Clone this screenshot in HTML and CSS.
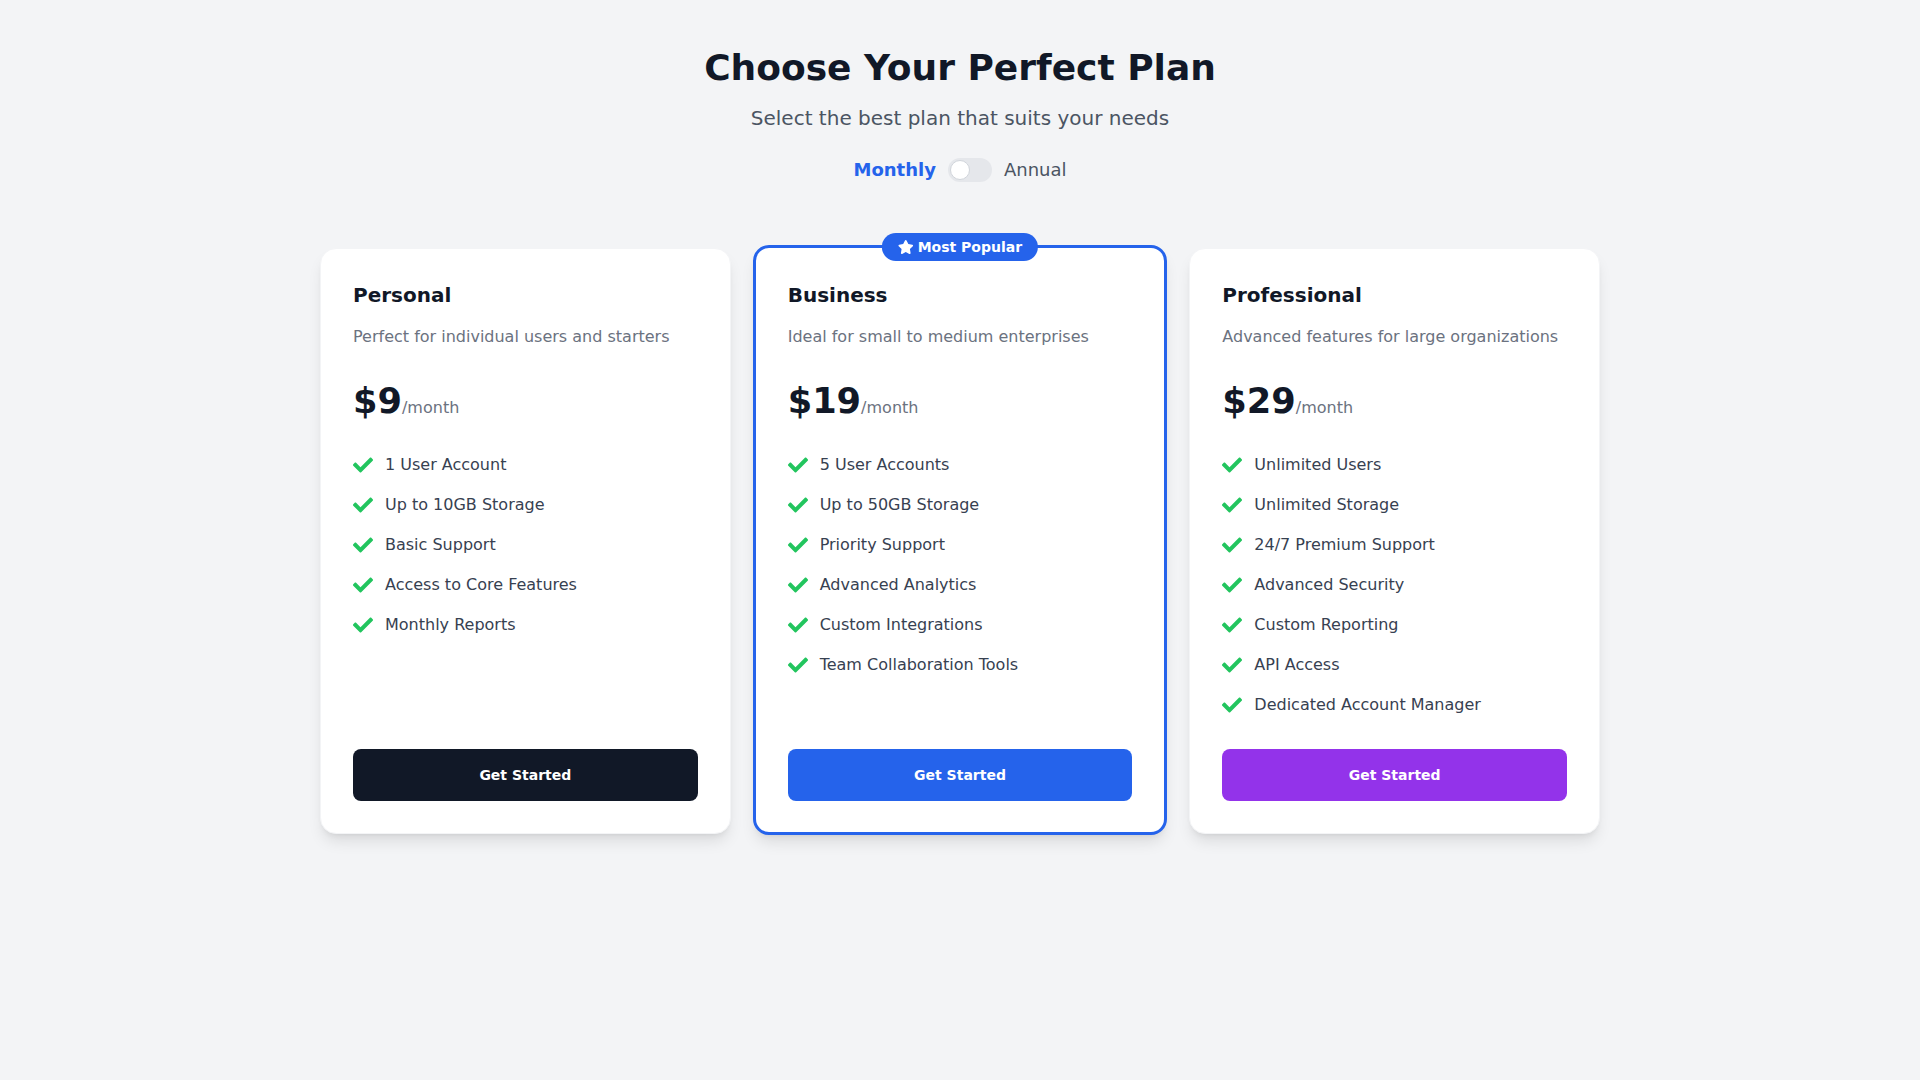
FILE: index.html
```html
<!DOCTYPE html>
<html lang="en">
<head>
<meta charset="utf-8">
<title>Pricing</title>
<link rel="stylesheet" href="styles.css">
</head>
<body>
<main class="page">
  <header class="header">
    <h1 class="title">Choose Your Perfect Plan</h1>
    <p class="subtitle">Select the best plan that suits your needs</p>
    <div class="billing">
      <span class="billing-label active">Monthly</span>
      <span class="switch"><span class="knob"></span></span>
      <span class="billing-label">Annual</span>
    </div>
  </header>

  <section class="plans">
    <article class="card">
      <h3 class="plan-name">Personal</h3>
      <p class="plan-desc">Perfect for individual users and starters</p>
      <div class="price"><span class="amount">$9</span><span class="period">/month</span></div>
      <ul class="features">
        <li><svg class="check" viewBox="0 0 512 512"><path d="M173.898 439.404l-166.4-166.4c-9.997-9.997-9.997-26.206 0-36.204l36.203-36.204c9.997-9.998 26.207-9.998 36.204 0L192 312.69 432.095 72.596c9.997-9.997 26.207-9.997 36.204 0l36.203 36.204c9.997 9.997 9.997 26.206 0 36.204l-294.4 294.401c-9.998 9.997-26.207 9.997-36.204-.001z"/></svg>1 User Account</li>
        <li><svg class="check" viewBox="0 0 512 512"><path d="M173.898 439.404l-166.4-166.4c-9.997-9.997-9.997-26.206 0-36.204l36.203-36.204c9.997-9.998 26.207-9.998 36.204 0L192 312.69 432.095 72.596c9.997-9.997 26.207-9.997 36.204 0l36.203 36.204c9.997 9.997 9.997 26.206 0 36.204l-294.4 294.401c-9.998 9.997-26.207 9.997-36.204-.001z"/></svg>Up to 10GB Storage</li>
        <li><svg class="check" viewBox="0 0 512 512"><path d="M173.898 439.404l-166.4-166.4c-9.997-9.997-9.997-26.206 0-36.204l36.203-36.204c9.997-9.998 26.207-9.998 36.204 0L192 312.69 432.095 72.596c9.997-9.997 26.207-9.997 36.204 0l36.203 36.204c9.997 9.997 9.997 26.206 0 36.204l-294.4 294.401c-9.998 9.997-26.207 9.997-36.204-.001z"/></svg>Basic Support</li>
        <li><svg class="check" viewBox="0 0 512 512"><path d="M173.898 439.404l-166.4-166.4c-9.997-9.997-9.997-26.206 0-36.204l36.203-36.204c9.997-9.998 26.207-9.998 36.204 0L192 312.69 432.095 72.596c9.997-9.997 26.207-9.997 36.204 0l36.203 36.204c9.997 9.997 9.997 26.206 0 36.204l-294.4 294.401c-9.998 9.997-26.207 9.997-36.204-.001z"/></svg>Access to Core Features</li>
        <li><svg class="check" viewBox="0 0 512 512"><path d="M173.898 439.404l-166.4-166.4c-9.997-9.997-9.997-26.206 0-36.204l36.203-36.204c9.997-9.998 26.207-9.998 36.204 0L192 312.69 432.095 72.596c9.997-9.997 26.207-9.997 36.204 0l36.203 36.204c9.997 9.997 9.997 26.206 0 36.204l-294.4 294.401c-9.998 9.997-26.207 9.997-36.204-.001z"/></svg>Monthly Reports</li>
      </ul>
      <button class="cta cta-dark">Get Started</button>
    </article>

    <article class="card card-featured">
      <div class="badge"><svg class="star" viewBox="0 0 576 512"><path d="M259.3 17.8L194 150.2 47.9 171.5c-26.2 3.8-36.7 36.1-17.7 54.6l105.7 103-25 145.5c-4.5 26.3 23.2 46 46.4 33.7L288 439.6l130.7 68.7c23.2 12.2 50.9-7.4 46.4-33.7l-25-145.5 105.7-103c19-18.5 8.5-50.8-17.7-54.6L382 150.2 316.7 17.8c-11.7-23.6-45.6-23.9-57.4 0z"/></svg>Most Popular</div>
      <h3 class="plan-name">Business</h3>
      <p class="plan-desc">Ideal for small to medium enterprises</p>
      <div class="price"><span class="amount">$19</span><span class="period">/month</span></div>
      <ul class="features">
        <li><svg class="check" viewBox="0 0 512 512"><path d="M173.898 439.404l-166.4-166.4c-9.997-9.997-9.997-26.206 0-36.204l36.203-36.204c9.997-9.998 26.207-9.998 36.204 0L192 312.69 432.095 72.596c9.997-9.997 26.207-9.997 36.204 0l36.203 36.204c9.997 9.997 9.997 26.206 0 36.204l-294.4 294.401c-9.998 9.997-26.207 9.997-36.204-.001z"/></svg>5 User Accounts</li>
        <li><svg class="check" viewBox="0 0 512 512"><path d="M173.898 439.404l-166.4-166.4c-9.997-9.997-9.997-26.206 0-36.204l36.203-36.204c9.997-9.998 26.207-9.998 36.204 0L192 312.69 432.095 72.596c9.997-9.997 26.207-9.997 36.204 0l36.203 36.204c9.997 9.997 9.997 26.206 0 36.204l-294.4 294.401c-9.998 9.997-26.207 9.997-36.204-.001z"/></svg>Up to 50GB Storage</li>
        <li><svg class="check" viewBox="0 0 512 512"><path d="M173.898 439.404l-166.4-166.4c-9.997-9.997-9.997-26.206 0-36.204l36.203-36.204c9.997-9.998 26.207-9.998 36.204 0L192 312.69 432.095 72.596c9.997-9.997 26.207-9.997 36.204 0l36.203 36.204c9.997 9.997 9.997 26.206 0 36.204l-294.4 294.401c-9.998 9.997-26.207 9.997-36.204-.001z"/></svg>Priority Support</li>
        <li><svg class="check" viewBox="0 0 512 512"><path d="M173.898 439.404l-166.4-166.4c-9.997-9.997-9.997-26.206 0-36.204l36.203-36.204c9.997-9.998 26.207-9.998 36.204 0L192 312.69 432.095 72.596c9.997-9.997 26.207-9.997 36.204 0l36.203 36.204c9.997 9.997 9.997 26.206 0 36.204l-294.4 294.401c-9.998 9.997-26.207 9.997-36.204-.001z"/></svg>Advanced Analytics</li>
        <li><svg class="check" viewBox="0 0 512 512"><path d="M173.898 439.404l-166.4-166.4c-9.997-9.997-9.997-26.206 0-36.204l36.203-36.204c9.997-9.998 26.207-9.998 36.204 0L192 312.69 432.095 72.596c9.997-9.997 26.207-9.997 36.204 0l36.203 36.204c9.997 9.997 9.997 26.206 0 36.204l-294.4 294.401c-9.998 9.997-26.207 9.997-36.204-.001z"/></svg>Custom Integrations</li>
        <li><svg class="check" viewBox="0 0 512 512"><path d="M173.898 439.404l-166.4-166.4c-9.997-9.997-9.997-26.206 0-36.204l36.203-36.204c9.997-9.998 26.207-9.998 36.204 0L192 312.69 432.095 72.596c9.997-9.997 26.207-9.997 36.204 0l36.203 36.204c9.997 9.997 9.997 26.206 0 36.204l-294.4 294.401c-9.998 9.997-26.207 9.997-36.204-.001z"/></svg>Team Collaboration Tools</li>
      </ul>
      <button class="cta cta-blue">Get Started</button>
    </article>

    <article class="card">
      <h3 class="plan-name">Professional</h3>
      <p class="plan-desc">Advanced features for large organizations</p>
      <div class="price"><span class="amount">$29</span><span class="period">/month</span></div>
      <ul class="features">
        <li><svg class="check" viewBox="0 0 512 512"><path d="M173.898 439.404l-166.4-166.4c-9.997-9.997-9.997-26.206 0-36.204l36.203-36.204c9.997-9.998 26.207-9.998 36.204 0L192 312.69 432.095 72.596c9.997-9.997 26.207-9.997 36.204 0l36.203 36.204c9.997 9.997 9.997 26.206 0 36.204l-294.4 294.401c-9.998 9.997-26.207 9.997-36.204-.001z"/></svg>Unlimited Users</li>
        <li><svg class="check" viewBox="0 0 512 512"><path d="M173.898 439.404l-166.4-166.4c-9.997-9.997-9.997-26.206 0-36.204l36.203-36.204c9.997-9.998 26.207-9.998 36.204 0L192 312.69 432.095 72.596c9.997-9.997 26.207-9.997 36.204 0l36.203 36.204c9.997 9.997 9.997 26.206 0 36.204l-294.4 294.401c-9.998 9.997-26.207 9.997-36.204-.001z"/></svg>Unlimited Storage</li>
        <li><svg class="check" viewBox="0 0 512 512"><path d="M173.898 439.404l-166.4-166.4c-9.997-9.997-9.997-26.206 0-36.204l36.203-36.204c9.997-9.998 26.207-9.998 36.204 0L192 312.69 432.095 72.596c9.997-9.997 26.207-9.997 36.204 0l36.203 36.204c9.997 9.997 9.997 26.206 0 36.204l-294.4 294.401c-9.998 9.997-26.207 9.997-36.204-.001z"/></svg>24/7 Premium Support</li>
        <li><svg class="check" viewBox="0 0 512 512"><path d="M173.898 439.404l-166.4-166.4c-9.997-9.997-9.997-26.206 0-36.204l36.203-36.204c9.997-9.998 26.207-9.998 36.204 0L192 312.69 432.095 72.596c9.997-9.997 26.207-9.997 36.204 0l36.203 36.204c9.997 9.997 9.997 26.206 0 36.204l-294.4 294.401c-9.998 9.997-26.207 9.997-36.204-.001z"/></svg>Advanced Security</li>
        <li><svg class="check" viewBox="0 0 512 512"><path d="M173.898 439.404l-166.4-166.4c-9.997-9.997-9.997-26.206 0-36.204l36.203-36.204c9.997-9.998 26.207-9.998 36.204 0L192 312.69 432.095 72.596c9.997-9.997 26.207-9.997 36.204 0l36.203 36.204c9.997 9.997 9.997 26.206 0 36.204l-294.4 294.401c-9.998 9.997-26.207 9.997-36.204-.001z"/></svg>Custom Reporting</li>
        <li><svg class="check" viewBox="0 0 512 512"><path d="M173.898 439.404l-166.4-166.4c-9.997-9.997-9.997-26.206 0-36.204l36.203-36.204c9.997-9.998 26.207-9.998 36.204 0L192 312.69 432.095 72.596c9.997-9.997 26.207-9.997 36.204 0l36.203 36.204c9.997 9.997 9.997 26.206 0 36.204l-294.4 294.401c-9.998 9.997-26.207 9.997-36.204-.001z"/></svg>API Access</li>
        <li><svg class="check" viewBox="0 0 512 512"><path d="M173.898 439.404l-166.4-166.4c-9.997-9.997-9.997-26.206 0-36.204l36.203-36.204c9.997-9.998 26.207-9.998 36.204 0L192 312.69 432.095 72.596c9.997-9.997 26.207-9.997 36.204 0l36.203 36.204c9.997 9.997 9.997 26.206 0 36.204l-294.4 294.401c-9.998 9.997-26.207 9.997-36.204-.001z"/></svg>Dedicated Account Manager</li>
      </ul>
      <button class="cta cta-purple">Get Started</button>
    </article>
  </section>
</main>
</body>
</html>
```

FILE: styles.css
```css
* { box-sizing: border-box; }

html, body {
  margin: 0;
  padding: 0;
  background: #f3f4f6;
  font-family: "DejaVu Sans", "Liberation Sans", sans-serif;
  color: #111827;
}

.page {
  max-width: 1280px;
  margin: 0 auto;
  padding: 48px 0;
}

.header {
  display: flex;
  flex-direction: column;
  align-items: center;
  margin-bottom: 64px;
}

.title {
  margin: 0 0 16px;
  font-size: 36px;
  line-height: 40px;
  font-weight: 700;
  color: #111827;
}

.subtitle {
  margin: 0 0 24px;
  font-size: 20px;
  line-height: 28px;
  color: #4b5563;
}

.billing {
  display: flex;
  align-items: center;
  gap: 12px;
  height: 28px;
}

.billing-label {
  font-size: 18px;
  line-height: 28px;
  color: #4b5563;
}

.billing-label.active {
  color: #2563eb;
  font-weight: 700;
}

.switch {
  position: relative;
  display: block;
  width: 44px;
  height: 24px;
  border-radius: 9999px;
  background: #e5e7eb;
}

.knob {
  position: absolute;
  top: 2px;
  left: 2px;
  width: 20px;
  height: 20px;
  border-radius: 50%;
  background: #fff;
  border: 1px solid #d1d5db;
}

.plans {
  display: grid;
  grid-template-columns: repeat(3, 1fr);
  gap: 24px;
}

.card {
  position: relative;
  display: flex;
  flex-direction: column;
  background: #fff;
  border: 1px solid #f3f4f6;
  border-radius: 16px;
  padding: 32px;
  box-shadow: 0 10px 15px -3px rgba(0, 0, 0, 0.1), 0 4px 6px -4px rgba(0, 0, 0, 0.1);
}

.card-featured {
  border: 3px solid #2563eb;
  margin: -3px -2px -1px;
  padding: 33px 32px 31px;
}

.badge {
  position: absolute;
  top: -15px;
  left: 50%;
  transform: translateX(-50%);
  display: flex;
  align-items: center;
  gap: 4px;
  padding: 4px 16px;
  background: #2563eb;
  color: #fff;
  font-size: 14px;
  line-height: 20px;
  font-weight: 700;
  border-radius: 9999px;
  white-space: nowrap;
}

.star {
  width: 15.75px;
  height: 14px;
  fill: #fff;
}

.plan-name {
  margin: 0 0 16px;
  font-size: 20px;
  line-height: 28px;
  font-weight: 700;
  color: #111827;
}

.plan-desc {
  margin: 0 0 32px;
  font-size: 16px;
  line-height: 24px;
  color: #6b7280;
}

.price {
  display: flex;
  align-items: baseline;
  margin-bottom: 32px;
}

.amount {
  font-size: 35.2px;
  line-height: 40px;
  font-weight: 700;
  color: #111827;
}

.period {
  font-size: 16px;
  line-height: 24px;
  color: #6b7280;
}

.features {
  list-style: none;
  margin: 0 0 32px;
  padding: 0;
  display: flex;
  flex-direction: column;
  gap: 16px;
  flex: 1;
}

.features li {
  display: flex;
  align-items: center;
  gap: 12px;
  font-size: 16px;
  line-height: 24px;
  color: #374151;
}

.check {
  width: 20px;
  height: 20px;
  fill: #22c55e;
  flex-shrink: 0;
}

.cta {
  display: block;
  width: 100%;
  border: 0;
  border-radius: 8px;
  padding: 16px 0;
  font-family: inherit;
  font-size: 14px;
  line-height: 20px;
  font-weight: 700;
  color: #fff;
  cursor: pointer;
}

.cta-dark { background: #111827; }
.cta-blue { background: #2563eb; }
.cta-purple { background: #9333ea; }
```
